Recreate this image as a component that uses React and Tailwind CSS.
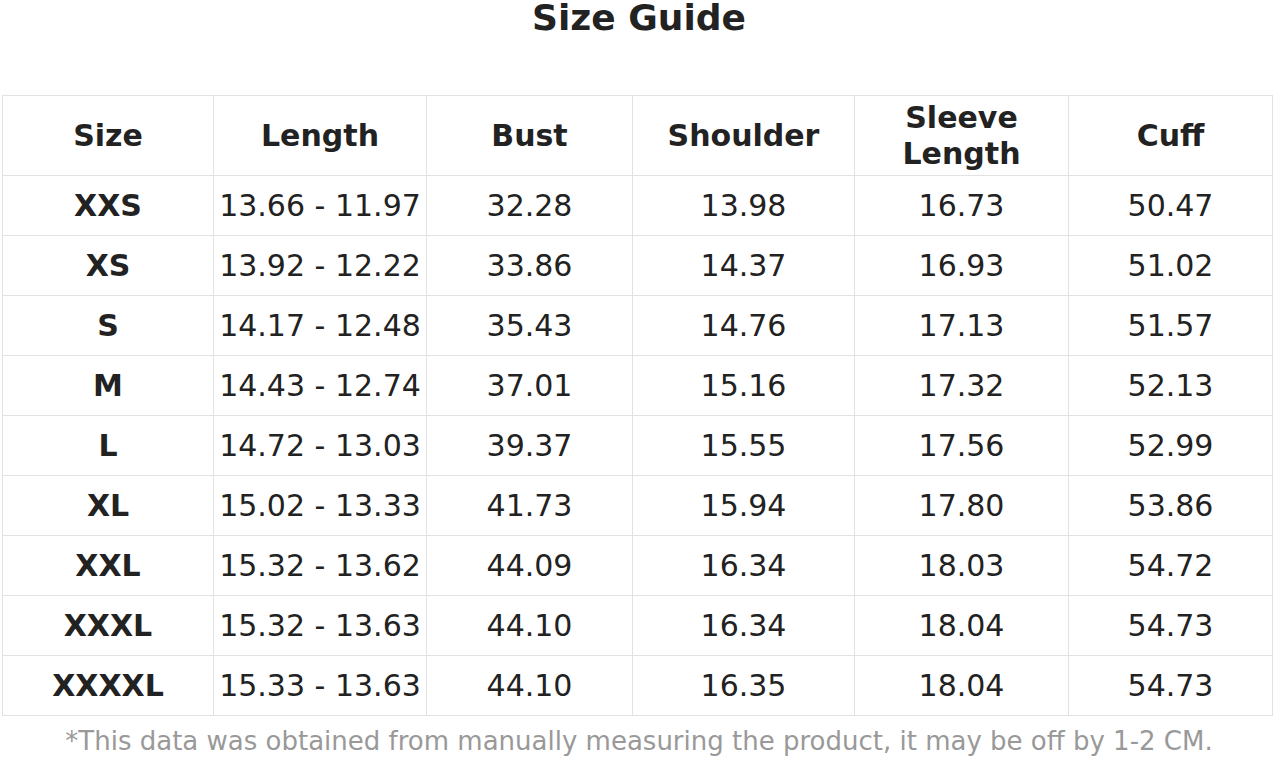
import React from 'react';

// size chart data, in inches
const HEADERS = ['Size', 'Length', 'Bust', 'Shoulder', 'Sleeve Length', 'Cuff'];

const ROWS = [
  ['XXS', '13.66 - 11.97', '32.28', '13.98', '16.73', '50.47'],
  ['XS', '13.92 - 12.22', '33.86', '14.37', '16.93', '51.02'],
  ['S', '14.17 - 12.48', '35.43', '14.76', '17.13', '51.57'],
  ['M', '14.43 - 12.74', '37.01', '15.16', '17.32', '52.13'],
  ['L', '14.72 - 13.03', '39.37', '15.55', '17.56', '52.99'],
  ['XL', '15.02 - 13.33', '41.73', '15.94', '17.80', '53.86'],
  ['XXL', '15.32 - 13.62', '44.09', '16.34', '18.03', '54.72'],
  ['XXXL', '15.32 - 13.63', '44.10', '16.34', '18.04', '54.73'],
  ['XXXXL', '15.33 - 13.63', '44.10', '16.35', '18.04', '54.73'],
];

const COL_WIDTHS = ['w-[211px]', 'w-[213px]', 'w-[206px]', 'w-[222px]', 'w-[214px]', 'w-[204px]'];

const App = () => {
  return (
    <div
      className="w-[1278px] h-[758px] bg-white text-[#222222] overflow-hidden"
      style={{ fontFamily: '"DejaVu Sans", "Liberation Sans", sans-serif' }}
    >
      {/* 标题 */}
      <div className="h-[95px] text-center">
        <h1 className="text-[36px] font-bold leading-none">Size Guide</h1>
      </div>

      <div className="pl-[2px]">
        <table className="w-[1271px] table-fixed border-collapse">
          <colgroup>
            {COL_WIDTHS.map((w, i) => (
              <col key={i} className={w} />
            ))}
          </colgroup>
          <thead>
            <tr className="h-[80px]">
              {HEADERS.map((h) => (
                <th
                  key={h}
                  className="border border-[#e2e2e2] px-2 text-[30px] font-bold leading-[36px] text-center align-middle"
                >
                  {h === 'Sleeve Length' ? (
                    <>
                      Sleeve
                      <br />
                      Length
                    </>
                  ) : (
                    h
                  )}
                </th>
              ))}
            </tr>
          </thead>
          <tbody>
            {ROWS.map((row) => (
              <tr key={row[0]} className="h-[60px]">
                {row.map((cell, i) => (
                  <td
                    key={i}
                    className={`border border-[#e2e2e2] p-0 text-[30px] leading-[36px] text-center align-middle whitespace-nowrap ${
                      i === 0 ? 'font-bold' : 'font-normal'
                    }`}
                  >
                    {cell}
                  </td>
                ))}
              </tr>
            ))}
          </tbody>
        </table>
      </div>

      {/* 备注 */}
      <p className="mt-[10px] text-center text-[26px] leading-[30px] text-[#999999]">
        *This data was obtained from manually measuring the product, it may be off by 1-2 CM.
      </p>
    </div>
  );
};

export default App;
